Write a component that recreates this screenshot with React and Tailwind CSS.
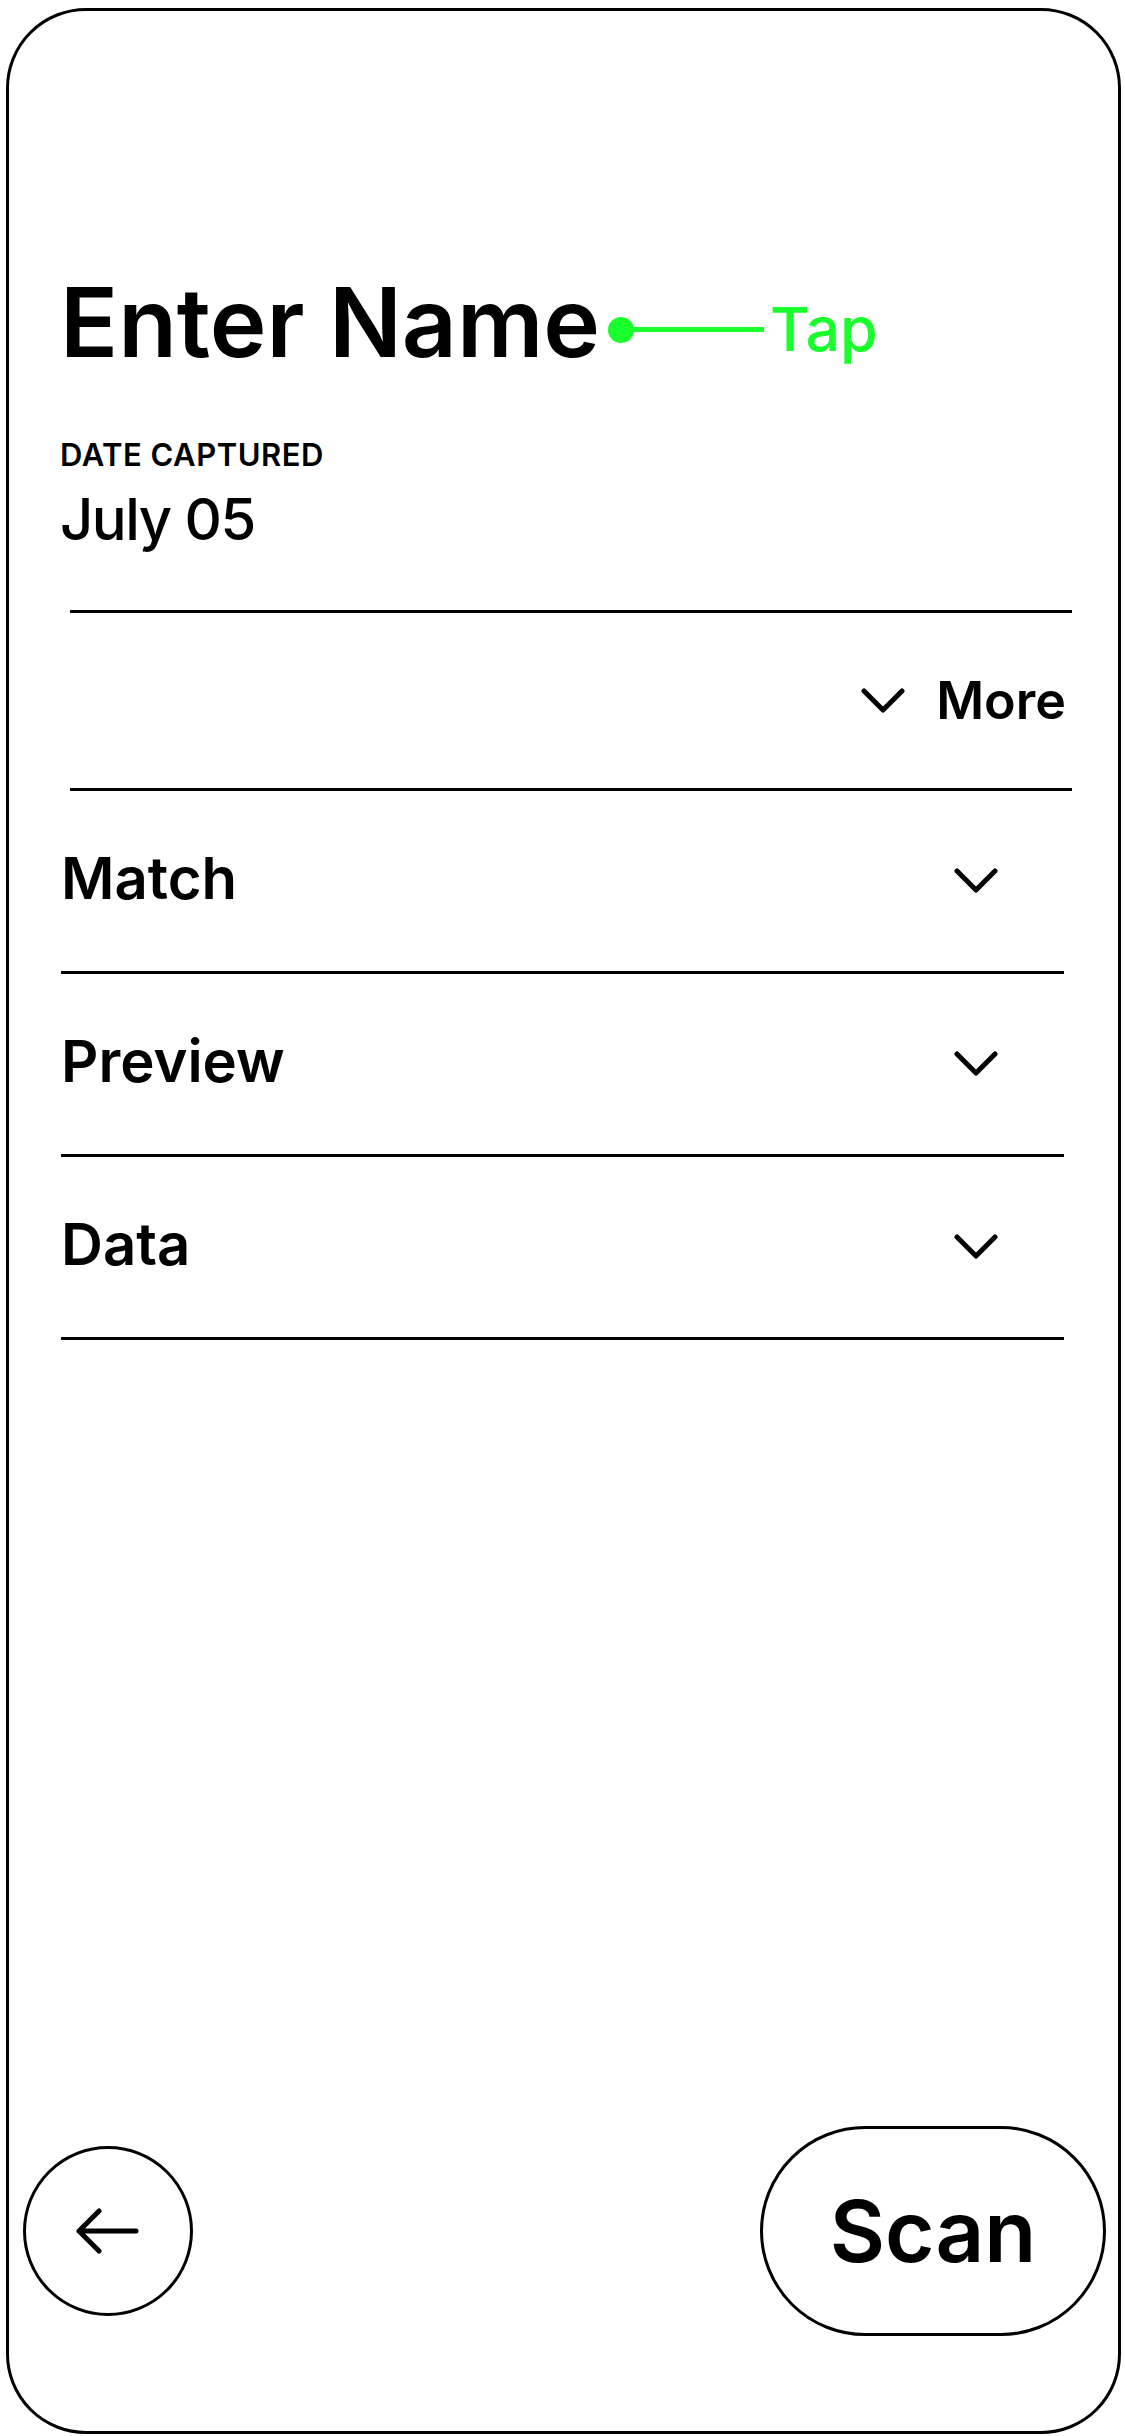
function Chevron() {
  return (
    <svg width="44" height="26" viewBox="0 0 44 26" fill="none">
      <path
        d="M3 3 L22 22 L41 3"
        stroke="black"
        strokeWidth="5"
        strokeLinecap="round"
        strokeLinejoin="round"
      />
    </svg>
  );
}

function BackArrow() {
  return (
    <svg width="64" height="46" viewBox="0 0 64 46" fill="none">
      <path
        d="M60 23 H3 M23 3 L3 23 L23 43"
        stroke="black"
        strokeWidth="5"
        strokeLinecap="round"
        strokeLinejoin="round"
      />
    </svg>
  );
}

const sections = ["Match", "Preview", "Data"];

export default function App() {
  return (
    <div className="w-[1125px] h-[2436px] bg-white pt-[8px] pl-[6px] font-[Inter,ui-sans-serif,sans-serif] text-black">
      <div className="w-[1115px] h-[2426px] border-[3px] border-black rounded-[80px] flex flex-col">
        {/* Header */}
        <div className="pt-[263px] pl-[51px]">
          <div className="flex items-start h-[96px]">
            <h1 className="text-[96px] leading-none font-semibold">
              Enter Name
            </h1>
            <div className="flex items-center h-[63px] mt-[24px] ml-[8px]">
              <span className="w-[26px] h-[26px] rounded-full bg-[#19ff2b]" />
              <span className="w-[132px] h-[5px] bg-[#19ff2b] -ml-[2px]" />
              <span className="ml-[6px] text-[61px] leading-none font-medium text-[#19ff2b]">
                Tap
              </span>
            </div>
          </div>

          <p className="mt-[69px] text-[31px] leading-none font-semibold tracking-[0.5px]">
            DATE CAPTURED
          </p>
          <p className="mt-[20px] text-[58px] leading-none font-medium tracking-[-1.5px]">
            July 05
          </p>
        </div>

        {/* More toggle */}
        <div className="mt-[62px] ml-[61px] w-[1002px] h-[181px] border-y-[3px] border-black flex items-center justify-end pr-[6px] gap-[31px]">
          <Chevron />
          <span className="text-[52px] leading-none font-semibold">More</span>
        </div>

        {/* Sections */}
        <div className="ml-[52px] w-[1003px]">
          {sections.map((name) => (
            <div
              key={name}
              className="h-[183px] border-b-[3px] border-black flex items-center justify-between pr-[66px]"
            >
              <span className="mb-[6px] text-[58px] leading-none font-semibold">
                {name}
              </span>
              <Chevron />
            </div>
          ))}
        </div>

        <div className="flex-1" />

        {/* Bottom actions */}
        <div className="flex items-center justify-between pl-[14px] pr-[12px] pb-[95px]">
          <button className="w-[170px] h-[170px] rounded-full border-[3px] border-black flex items-center justify-center">
            <BackArrow />
          </button>
          <button className="w-[346px] h-[210px] rounded-full border-[3px] border-black flex items-center justify-center text-[85px] leading-none font-semibold">
            Scan
          </button>
        </div>
      </div>
    </div>
  );
}
